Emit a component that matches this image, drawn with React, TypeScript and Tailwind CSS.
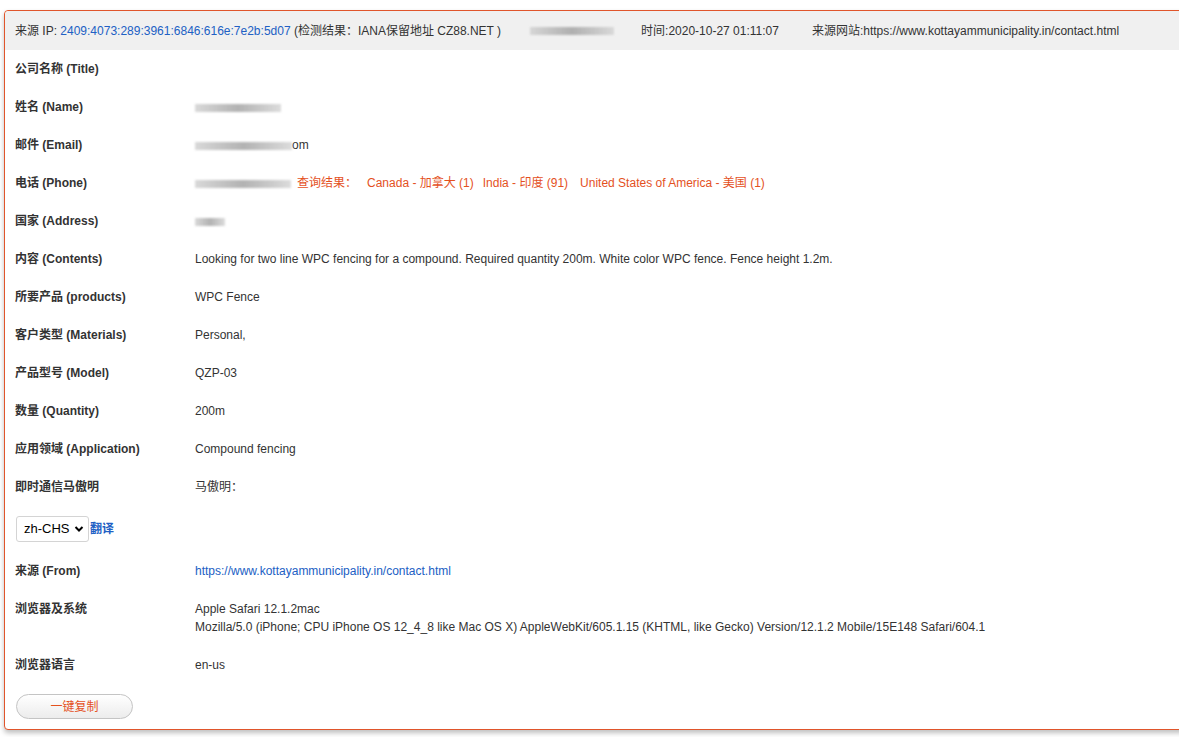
import type { ReactNode } from 'react';

const font = { fontFamily: '"Liberation Sans", "Noto Sans CJK SC", sans-serif' };

function Blur({ w }: { w: number }) {
  // masked / blurred private data
  return (
    <span
      className="inline-block h-[8px] align-middle bg-gradient-to-r from-[#d0d0d0] via-[#a0a0a0] to-[#d4d4d4] blur-[1px] opacity-80"
      style={{ width: w }}
    />
  );
}

function Row({ label, children, top }: { label: string; children?: ReactNode; top?: boolean }) {
  return (
    <div className={`flex py-[10px] leading-[18px] ${top ? 'items-start' : 'items-center'}`}>
      <div className="w-[180px] shrink-0 font-bold text-[#333]">{label}</div>
      <div className="text-[#333]">{children}</div>
    </div>
  );
}

export default function App() {
  return (
    <div className="w-[1179px] h-[737px] overflow-hidden bg-white text-[12px]" style={font}>
      <div className="ml-[4px] mt-[10px] w-[1200px] border border-[#e0552b] rounded-[4px] shadow-[0_3px_5px_rgba(0,0,0,0.25)] bg-white">
        <div className="flex items-center h-[39px] pl-[10px] bg-[#f0f0f0] text-[#333] rounded-t-[4px]">
          <span>
            来源 IP: <span className="text-[#2160c4]">2409:4073:289:3961:6846:616e:7e2b:5d07</span> (检测结果：IANA保留地址 CZ88.NET )
          </span>
          <span className="ml-[29px]"><Blur w={84} /></span>
          <span className="ml-[27px]">时间:2020-10-27 01:11:07</span>
          <span className="ml-[33px]">来源网站:https://www.kottayammunicipality.in/contact.html</span>
        </div>
        <div className="px-[10px] pb-[10px]">
          <Row label="公司名称 (Title)" />
          <Row label="姓名 (Name)"><Blur w={86} /></Row>
          <Row label="邮件 (Email)"><Blur w={97} />om</Row>
          <Row label="电话 (Phone)">
            <Blur w={96} />
            <span className="ml-[6px] text-[#e4511e]">查询结果：</span>
            <span className="ml-[10px] text-[#e4511e]">Canada - 加拿大 (1)</span>
            <span className="ml-[9px] text-[#e4511e]">India - 印度 (91)</span>
            <span className="ml-[12px] text-[#e4511e]">United States of America - 美国 (1)</span>
          </Row>
          <Row label="国家 (Address)"><Blur w={30} /></Row>
          <Row label="内容 (Contents)">
            Looking for two line WPC fencing for a compound. Required quantity 200m. White color WPC fence. Fence height 1.2m.
          </Row>
          <Row label="所要产品 (products)">WPC Fence</Row>
          <Row label="客户类型 (Materials)">Personal,</Row>
          <Row label="产品型号 (Model)">QZP-03</Row>
          <Row label="数量 (Quantity)">200m</Row>
          <Row label="应用领域 (Application)">Compound fencing</Row>
          <Row label="即时通信马傲明">马傲明：</Row>
          <div className="flex items-center py-[10px]">
            <div className="relative">
              <select
                defaultValue="zh-CHS"
                className="appearance-none h-[26px] w-[73px] pl-[7px] border border-[#d4d4d4] rounded-[3px] bg-white text-[13px] text-black ml-[1px]"
              >
                <option>zh-CHS</option>
                <option>en</option>
              </select>
              <svg className="absolute right-[5px] top-[9px] pointer-events-none" width="10" height="8" viewBox="0 0 10 8">
                <path d="M1.5 2 L5 5.5 L8.5 2" stroke="#000" strokeWidth="2" fill="none" />
              </svg>
            </div>
            <span className="ml-[1px] font-bold text-[#2160c4]">翻译</span>
          </div>
          <Row label="来源 (From)"><span className="text-[#2160c4]">https://www.kottayammunicipality.in/contact.html</span></Row>
          <Row label="浏览器及系统" top>
            <div>Apple Safari 12.1.2mac</div>
            <div>Mozilla/5.0 (iPhone; CPU iPhone OS 12_4_8 like Mac OS X) AppleWebKit/605.1.15 (KHTML, like Gecko) Version/12.1.2 Mobile/15E148 Safari/604.1</div>
          </Row>
          <Row label="浏览器语言">en-us</Row>
          <button className="ml-[1px] mt-[10px] h-[25px] w-[117px] rounded-full border border-[#c4c4c4] bg-gradient-to-b from-white to-[#ececec] text-[#e4511e] text-[12px]">
            一键复制
          </button>
        </div>
      </div>
    </div>
  );
}
